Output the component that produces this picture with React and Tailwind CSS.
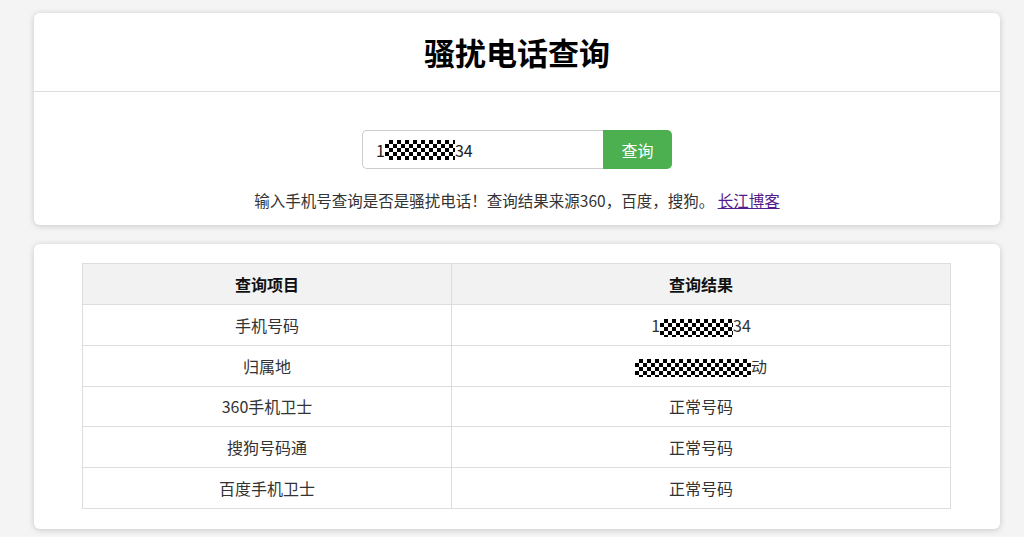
const Mask = ({ w, h = 20 }) => (
    <span
        className="inline-block align-middle bg-[repeating-conic-gradient(#000_0%_25%,#fff_0%_50%)] bg-[length:8px_8px]"
        style={{ width: w, height: h }}
    />
);

const rows = [
    { name: "手机号码", value: <>1<Mask w={73} h={18} />34</> },
    { name: "归属地", value: <><Mask w={116} h={18} />动</> },
    { name: "360手机卫士", value: "正常号码" },
    { name: "搜狗号码通", value: "正常号码" },
    { name: "百度手机卫士", value: "正常号码" },
];

export default function App() {
    return (
        <div className="min-h-[537px] bg-[#f4f4f4] pt-[13px] pl-[34px] pr-[24px] pb-[9px] text-[#333] font-['Microsoft_YaHei','Noto_Sans_CJK_SC',sans-serif]">
            <div className="bg-white rounded-md shadow-[0_1px_6px_rgba(0,0,0,0.18)]">
                <div className="h-[79px] flex items-center justify-center border-b border-[#ddd]">
                    <h1 className="text-[31px] font-bold text-black">骚扰电话查询</h1>
                </div>
                <div className="pt-[38px] pb-[14px] flex flex-col items-center">
                    <div className="flex">
                        <div className="w-[241px] h-[39px] border border-[#ccc] border-r-0 rounded-l-[5px] flex items-center pl-[13px] text-[16px] text-[#222]">
                            1<Mask w={70} h={20} />34
                        </div>
                        <button className="w-[69px] h-[39px] bg-[#4caf50] text-white text-[16px] rounded-r-[5px]">
                            查询
                        </button>
                    </div>
                    <p className="mt-[20px] text-[15.5px] leading-[22px]">
                        输入手机号查询是否是骚扰电话！查询结果来源360，百度，搜狗。{" "}
                        <a href="#" className="text-[#551a8b] underline">长江博客</a>
                    </p>
                </div>
            </div>

            <div className="mt-[19px] bg-white rounded-md shadow-[0_1px_6px_rgba(0,0,0,0.18)] pl-[48px] pr-[49px] pt-[19px] pb-[20px]">
                <table className="w-full border-collapse text-[16px]">
                    <thead>
                        <tr className="bg-[#f2f2f2] h-[41px]">
                            <th className="w-[369px] border border-[#ddd] font-bold text-[#111]">查询项目</th>
                            <th className="border border-[#ddd] font-bold text-[#111]">查询结果</th>
                        </tr>
                    </thead>
                    <tbody>
                        {rows.map((r) => (
                            <tr key={r.name} className="h-[40.8px]">
                                <td className="border border-[#ddd] text-center">{r.name}</td>
                                <td className="border border-[#ddd] text-center">{r.value}</td>
                            </tr>
                        ))}
                    </tbody>
                </table>
            </div>
        </div>
    );
}
